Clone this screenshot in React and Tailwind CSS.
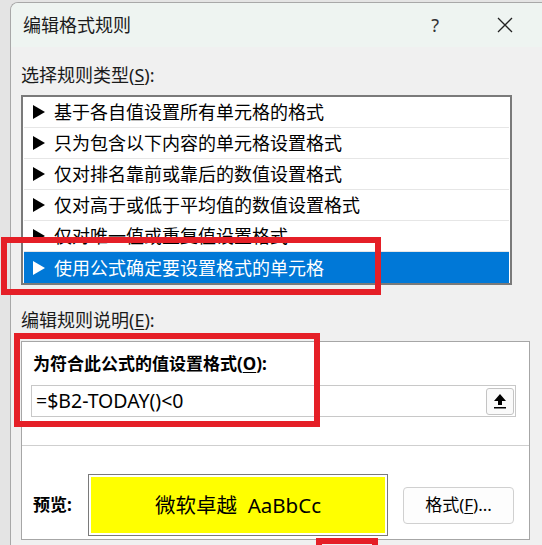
import React from 'react'

const RULES = [
  '基于各自值设置所有单元格的格式',
  '只为包含以下内容的单元格设置格式',
  '仅对排名靠前或靠后的数值设置格式',
  '仅对高于或低于平均值的数值设置格式',
  '仅对唯一值或重复值设置格式',
  '使用公式确定要设置格式的单元格',
]

const SELECTED = 5

function Arrow({ white }) {
  return (
    <svg width="12" height="14" viewBox="0 0 12 14" className="shrink-0">
      <polygon points="0,0 12,7 0,14" fill={white ? '#ffffff' : '#000000'} />
    </svg>
  )
}

export default function App() {
  return (
    <div className="relative w-[542px] h-[545px] overflow-hidden bg-[#e4e4e4] pt-[2px] pl-[10px] font-['Noto_Sans','Noto_Sans_CJK_SC',sans-serif] text-[#1b1b1b]">
      {/* dialog */}
      <div className="h-[560px] w-[540px] rounded-t-[8px] border-l border-t border-[#a8a8a8] bg-[#f0f0f0] overflow-hidden">
        {/* title bar */}
        <div className="flex h-[44px] items-center bg-[#eef4f1] pl-[12px]">
          <span className="text-[18px] leading-none">编辑格式规则</span>
          <span className="ml-auto mr-[58px] text-[18px] leading-none text-[#333]">?</span>
          <svg width="16" height="16" viewBox="0 0 16 16" className="mr-[37px]">
            <path d="M1 1 L15 15 M15 1 L1 15" stroke="#222" strokeWidth="1.3" fill="none" />
          </svg>
        </div>

        <div className="pl-[10px]">
          <div className="mt-[16px] text-[18px] leading-[24px]">
            选择规则类型(<span className="underline underline-offset-2">S</span>):
          </div>

          {/* rule list */}
          <div className="mt-[8px] w-[491px] border-2 border-[#7a7a7a] bg-white px-[1px]">
            {RULES.map((r, i) => (
              <div
                key={r}
                className={
                  i === SELECTED
                    ? 'flex h-[31px] items-center gap-[9px] bg-[#0078d7] pl-[9px] text-[18px] text-white'
                    : 'flex h-[31px] items-center gap-[9px] border-b border-[#e6e6e6] pl-[9px] text-[18px] text-black'
                }
              >
                <Arrow white={i === SELECTED} />
                <span className="leading-none">{r}</span>
              </div>
            ))}
          </div>

          <div className="mt-[23px] text-[18px] leading-[24px]">
            编辑规则说明(<span className="underline underline-offset-2">E</span>):
          </div>

          {/* description panel */}
          <div className="mt-[9px] w-[509px] border border-[#a6a6a6] bg-white pb-[3px]">
            <div className="pl-[11px] pt-[10px] text-[17px] font-bold leading-[24px] text-black">
              为符合此公式的值设置格式(<span className="underline underline-offset-2">O</span>):
            </div>
            <div className="ml-[9px] mt-[9px] flex h-[32px] w-[485px] items-center border border-[#c8c8c8] bg-white pl-[4px] pr-[1px]">
              <span className="text-[19.5px] leading-none text-black">=$B2-TODAY()&lt;0</span>
              <div className="ml-auto flex h-[27px] w-[28px] items-center justify-center rounded-[3px] border border-[#c4c4c4] bg-[#fafafa]">
                <svg width="14" height="16" viewBox="0 0 14 16">
                  <polygon points="7,1 13,8 9,8 9,12 5,12 5,8 1,8" fill="#000" />
                  <rect x="1" y="14" width="12" height="1.5" fill="#000" />
                </svg>
              </div>
            </div>

            <div className="mt-[28px] h-px bg-[#cfcfcf]" />

            <div className="mt-[28px] flex items-center">
              <span className="ml-[11px] w-[55px] text-[17px] font-bold text-black">预览:</span>
              <div className="h-[62px] w-[300px] border border-[#7a7a7a] bg-white p-[2px]">
                <div className="flex h-full items-center justify-center bg-[#ffff00] text-[20.5px] text-black">
                  微软卓越&nbsp;&nbsp;AaBbCc
                </div>
              </div>
              <div className="ml-[15px] flex h-[37px] w-[111px] items-center justify-center rounded-[4px] border border-[#d0d0d0] bg-[#fdfdfd] text-[17px] text-black">
                格式(<span className="underline underline-offset-2">F</span>)...
              </div>
            </div>
          </div>
        </div>
      </div>

      {/* red annotation boxes */}
      <div className="absolute left-[1px] top-[237px] h-[58px] w-[380px] border-[6px] border-[#e51f27]" />
      <div className="absolute left-[14px] top-[333px] h-[94px] w-[306px] border-[6px] border-[#e51f27]" />
      <div className="absolute left-[316px] top-[538px] h-[20px] w-[62px] border-[6px] border-[#e51f27]" />
    </div>
  )
}
